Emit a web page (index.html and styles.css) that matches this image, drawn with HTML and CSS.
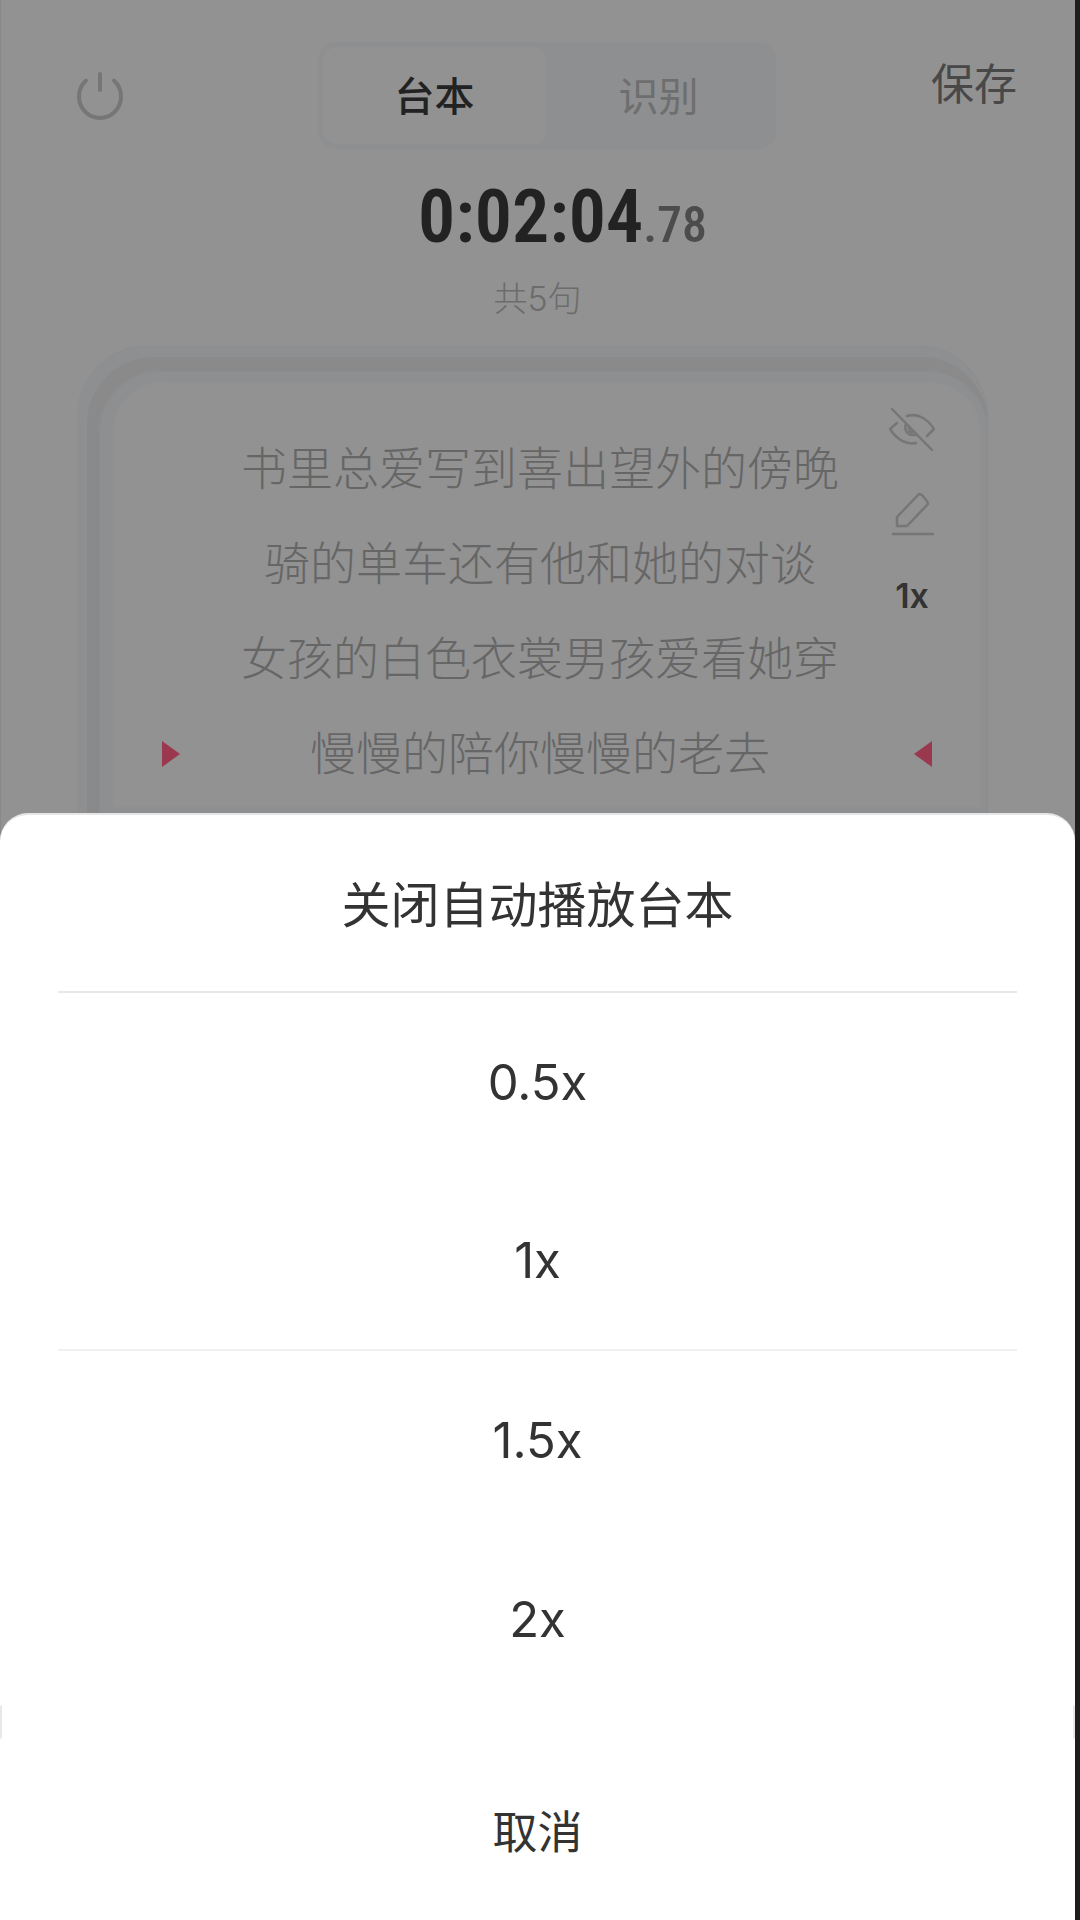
FILE: index.html
```html
<!DOCTYPE html>
<html lang="zh-CN">
<head>
	<meta charset="UTF-8" />
	<meta name="viewport" content="width=device-width, initial-scale=1" />
	<title>台本</title>
	<link rel="stylesheet" href="styles.css">
</head>
<body>
	<!-- 顶部栏 开始 -->
	<header class="topbar">
		<button class="power" type="button" aria-label="关闭">
			<svg width="48" height="52" viewBox="0 0 48 52" fill="none" stroke="currentColor" stroke-width="4" stroke-linecap="round">
				<path d="M24 4V20"/>
				<path d="M10 10.5A21 21.5 0 1 0 38 10.5"/>
			</svg>
		</button>
		<nav class="tabs">
			<button class="tab active" type="button">台本</button>
			<button class="tab" type="button">识别</button>
		</nav>
		<button class="save" type="button">保存</button>
	</header>
	<!-- 顶部栏 结束 -->

	<div class="timer">0:02:04<small>.78</small></div>
	<p class="count">共5句</p>

	<!-- 台本卡片 开始 -->
	<main class="card">
		<ul class="lines">
			<li>书里总爱写到喜出望外的傍晚</li>
			<li>骑的单车还有他和她的对谈</li>
			<li>女孩的白色衣裳男孩爱看她穿</li>
			<li class="current"><i class="arrow"></i>慢慢的陪你慢慢的老去<i class="arrow back"></i></li>
		</ul>
		<div class="tools">
			<button type="button" aria-label="隐藏台本">
				<svg width="46" height="44" viewBox="0 0 46 44" fill="none" stroke="currentColor" stroke-width="2.5" stroke-linecap="round" stroke-linejoin="round">
					<path d="M3 1L43 42"/>
					<path d="M18 8C28 5 38 10 45 21L38 28"/>
					<path d="M8 15L1 21C8 32 18 37 27 35"/>
					<path d="M17 16C15 22 18 28 26 27M20 19C19 22 21 25 24 24"/>
				</svg>
			</button>
			<button type="button" aria-label="编辑台本">
				<svg width="46" height="44" viewBox="0 0 46 44" fill="none" stroke="currentColor" stroke-width="2.5" stroke-linejoin="round">
					<path d="M8 34V25L30 2L33 3L38 9L39 12L18 34Z"/>
					<path d="M3 42H45"/>
				</svg>
			</button>
			<button class="speed" type="button">1x</button>
		</div>
	</main>
	<!-- 台本卡片 结束 -->

	<!-- 播放速度弹层 开始 -->
	<section class="sheet">
		<button class="option title" type="button">关闭自动播放台本</button>
		<button class="option" type="button">0.5x</button>
		<button class="option line" type="button">1x</button>
		<button class="option" type="button">1.5x</button>
		<button class="option" type="button">2x</button>
		<div class="split"></div>
		<button class="option cancel" type="button">取消</button>
	</section>
	<!-- 播放速度弹层 结束 -->
</body>
</html>
```

FILE: styles.css
```css
*{
	margin:0;
	padding:0;
	box-sizing:border-box;
}
body{
	display:flex;
	flex-direction:column;
	min-height:100vh;
	border-right:5px solid #1e1e1e;
	background:#929292;
	box-shadow:inset 1px 0 #888;
	font-family:Inter,"Noto Sans CJK SC",sans-serif;
	color:#222;
}
button{
	border:0;
	background:none;
	font:inherit;
	color:inherit;
	cursor:pointer;
}
svg{
	display:block;
}
ul{
	list-style:none;
}

/* 顶部栏 */
.topbar{
	display:grid;
	grid-template-columns:1fr 458px 1fr;
	align-items:center;
	padding:42px 58px 0 76px;
}
.power{
	justify-self:start;
	color:#767676;
}
.tabs{
	display:flex;
	height:107px;
	padding:5px;
	border-radius:18px;
	background:#8d8f91;
}
.tab{
	flex:1;
	padding-top:2px;
	border-radius:14px;
	font-size:40px;
	line-height:56px;
	color:#6e6e6e;
}
.tab.active{
	background:#929292;
	font-weight:500;
	color:#222;
}
.save{
	align-self:start;
	justify-self:end;
	margin-top:14px;
	font-size:43px;
	line-height:56px;
	color:#484848;
}

/* 计时 */
.timer{
	padding:24px 0 0 50px;
	font-family:"Roboto Condensed","Liberation Sans Narrow",Roboto,sans-serif;
	font-size:74px;
	font-weight:600;
	line-height:88px;
	text-align:center;
}
.timer small{
	font-size:50px;
	font-weight:500;
	color:#4c4c4c;
}
.count{
	margin-top:6px;
	font-size:34px;
	font-weight:300;
	line-height:48px;
	text-align:center;
	color:#6c6c6c;
}

/* 台本卡片 */
.card{
	display:grid;
	flex:1;
	margin:22px 87px 0 77px;
	padding:76px 53px 0 71px;
	border-radius:72px 72px 0 0;
	box-shadow:
		inset 5px 7px 0 5px #8d8f91,
		inset 11px 15px 2px 11px #8a8a8a,
		inset 14px 16px 2px 21px #8d8f91;
}
.lines,.tools{
	grid-area:1 / 1;
}
.lines{
	padding-right:3px;
	font-size:46px;
	font-weight:300;
	line-height:95px;
	text-align:center;
	color:#666;
}
.current{
	display:grid;
	grid-template-columns:1fr auto 1fr;
	align-items:center;
}
.arrow{
	justify-self:start;
	margin-left:14px;
	border:solid transparent;
	border-width:13px 0 13px 18px;
	border-left-color:#9a3850;
}
.arrow.back{
	justify-self:end;
	margin-left:0;
	border-width:13px 18px 13px 0;
	border-right-color:#9a3850;
}
.tools{
	display:flex;
	flex-direction:column;
	gap:40px;
	justify-self:end;
	align-self:start;
	margin-top:-13px;
	color:#767676;
}
.tools .speed{
	font-size:34px;
	font-weight:600;
	line-height:40px;
	color:#333;
}

/* 播放速度弹层 */
.sheet{
	display:flex;
	flex-direction:column;
	border-top:2px solid #e6e6e6;
	border-radius:28px 28px 0 0;
	background:#fff;
}
.option{
	height:179px;
	margin:0 58px;
	font-size:49px;
	color:#333;
}
.title{
	height:178px;
	padding-bottom:4px;
	border-bottom:2px solid #e8e8e8;
}
.line{
	border-bottom:2px solid #f0f0f0;
}
.split{
	height:34px;
	margin-top:-4px;
	border:solid #e8e8e8;
	border-width:0 2px;
	border-radius:2px;
}
.cancel{
	height:181px;
	font-size:45px;
}
```
